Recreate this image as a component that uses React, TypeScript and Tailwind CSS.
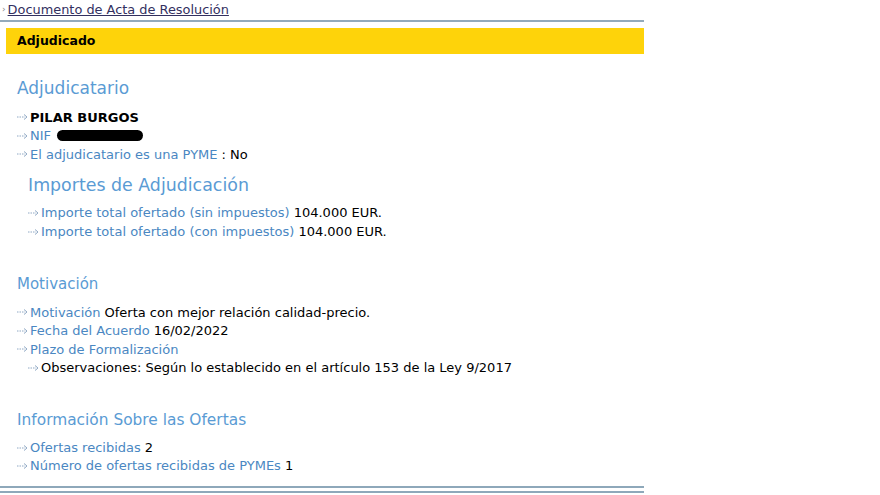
const Arrow = () => (
  <svg width="12" height="8" viewBox="0 0 12 8" className="mr-px inline-block shrink-0">
    <path d="M0 4h8" stroke="#8fa8c4" strokeWidth="1" strokeDasharray="1.5 1" />
    <path d="M7 1.5L10 4L7 6.5" fill="none" stroke="#8fa8c4" strokeWidth="1" />
  </svg>
);

type RowProps = { label: string; value?: string; bold?: boolean; plain?: boolean };

function Row({ label, value, bold, plain }: RowProps) {
  return (
    <div className="flex h-[18.6px] items-center">
      <Arrow />
      {bold ? (
        <span className="font-bold text-black">{label}</span>
      ) : plain ? (
        <span className="text-black">{label}</span>
      ) : (
        <span className="text-[#4a87c2]">{label}</span>
      )}
      {value && <span className="ml-[4px] text-black">{value}</span>}
    </div>
  );
}

export default function App() {
  return (
    <div className="h-[495px] w-[880px] overflow-hidden bg-white font-['DejaVu_Sans',Verdana,sans-serif] text-[13px]">
      <div className="w-[644px]">
        <div className="flex h-[22px] items-center border-b-2 border-[#93aabb]">
          <span className="ml-[2px] mr-[2px] text-[9px] text-[#8a8a8a]">›</span>
          <span className="text-[12.9px] text-[#33305f] underline">Documento de Acta de Resolución</span>
        </div>
        <div className="ml-[6px] mt-[6px] flex h-[26px] items-center bg-[#fed30a] pl-[11px] text-[12.5px] font-bold text-black">
          Adjudicado
        </div>

        <div className="pl-[17px]">
          <h2 className="mt-[24px] text-[17px] leading-[20px] text-[#5a9bd4]">Adjudicatario</h2>
          <div className="mt-[10px]">
            <Row label="PILAR BURGOS" bold />
            <div className="flex h-[18.6px] items-center">
              <Arrow />
              <span className="text-[#4a87c2]">NIF</span>
              <span className="ml-[6px] inline-block h-[11px] w-[86px] rounded-full bg-black" />
            </div>
            <div className="flex h-[18.6px] items-center">
              <Arrow />
              <span className="text-[#4a87c2]">El adjudicatario es una PYME</span>
              <span className="ml-[4px] text-black">: No</span>
            </div>
          </div>

          <div className="pl-[11px]">
            <h3 className="mt-[11px] text-[17.4px] leading-[20px] text-[#5a9bd4]">Importes de Adjudicación</h3>
            <div className="mt-[9px]">
              <Row label="Importe total ofertado (sin impuestos)" value="104.000 EUR." />
              <Row label="Importe total ofertado (con impuestos)" value="104.000 EUR." />
            </div>
          </div>

          <h2 className="mt-[33px] text-[15px] leading-[20px] text-[#5a9bd4]">Motivación</h2>
          <div className="mt-[9px]">
            <Row label="Motivación" value="Oferta con mejor relación calidad-precio." />
            <Row label="Fecha del Acuerdo" value="16/02/2022" />
            <Row label="Plazo de Formalización" />
            <div className="pl-[11px]">
              <Row label="Observaciones: Según lo establecido en el artículo 153 de la Ley 9/2017" plain />
            </div>
          </div>

          <h2 className="mt-[33px] text-[15.4px] leading-[20px] text-[#5a9bd4]">Información Sobre las Ofertas</h2>
          <div className="mt-[8px]">
            <Row label="Ofertas recibidas" value="2" />
            <Row label="Número de ofertas recibidas de PYMEs" value="1" />
          </div>
        </div>

        <div className="mt-[10px] h-[2px] bg-[#8ea8ba]" />
        <div className="mt-[3px] h-[2px] bg-[#8ea8ba]" />
      </div>
    </div>
  );
}
